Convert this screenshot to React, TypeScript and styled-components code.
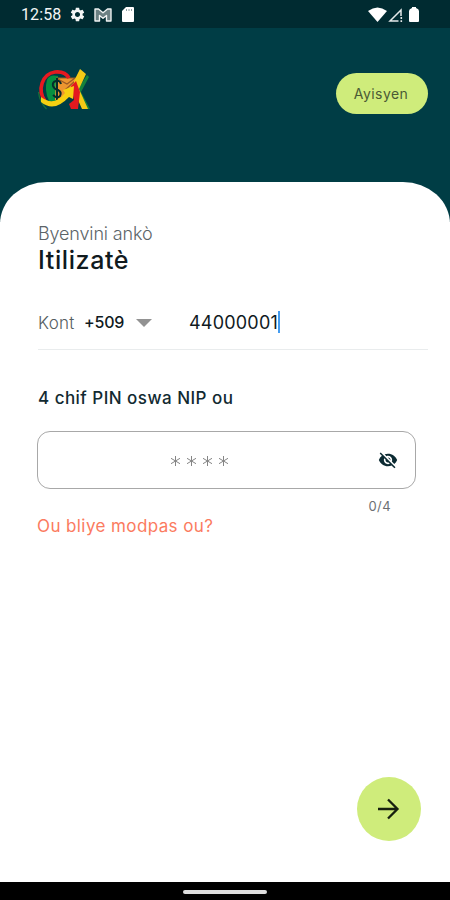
import React from 'react';
import styled, { createGlobalStyle } from 'styled-components';
import { MdSettings, MdVisibilityOff } from 'react-icons/md';

const GlobalStyle = createGlobalStyle`
  * { box-sizing: border-box; }
  body { margin: 0; background: #fff; }
`;

const Screen = styled.div`
  width: 450px;
  height: 900px;
  display: flex;
  flex-direction: column;
  overflow: hidden;
  background: #fff;
  color: #101a1e;
  font-family: Inter, Roboto, sans-serif;
`;

const StatusBar = styled.div`
  flex: none;
  height: 28px;
  padding: 1px 29px 0 21px;
  display: flex;
  align-items: center;
  justify-content: space-between;
  background: #002b31;
  color: #f4f6f6;
`;

const StatusGroup = styled.div<{ $gap: number }>`
  display: flex;
  align-items: center;
  gap: ${(p) => p.$gap}px;
  svg { display: block; }
`;

const Clock = styled.span`
  width: 40px;
  font: 400 16px/20px Roboto, sans-serif;
  letter-spacing: 0.1px;
  white-space: nowrap;
`;

const Header = styled.header`
  flex: none;
  height: 194px;
  padding: 38px 22px 0 36px;
  display: flex;
  align-items: flex-start;
  justify-content: space-between;
  background: #003d45;
`;

const LanguageButton = styled.button`
  width: 92px;
  height: 41px;
  margin-top: 7px;
  padding: 0 2px 0 0;
  border: 0;
  border-radius: 21px;
  background: #cfec7b;
  color: #4a5a35;
  font: 400 14px/20px Inter, sans-serif;
  letter-spacing: 0.45px;
`;

const Card = styled.main`
  flex: 1;
  margin-top: -40px;
  padding: 41px 22px 0 38px;
  display: flex;
  flex-direction: column;
  border-radius: 47px 47px 0 0 / 42px 42px 0 0;
  background: #fff;
`;

const Greeting = styled.div`
  font-size: 18px;
  line-height: 22px;
  font-weight: 300;
  letter-spacing: -0.15px;
  color: #5c6468;
`;

const UserName = styled.h1`
  margin: 0;
  font-size: 25px;
  line-height: 30px;
  font-weight: 500;
  letter-spacing: 0.6px;
`;

const AccountRow = styled.div`
  height: 56px;
  margin-top: 19px;
  display: flex;
  align-items: center;
  border-bottom: 1px solid #e9eced;
`;

const AccountLabel = styled.span`
  width: 46px;
  padding-top: 2px;
  font-size: 17px;
  font-weight: 300;
  letter-spacing: 0.3px;
  color: #555d61;
`;

const DialCode = styled.span`
  width: 52px;
  font-size: 16px;
  font-weight: 500;
  letter-spacing: -0.2px;
`;

const AccountNumber = styled.span`
  margin-left: 37px;
  padding-top: 1px;
  font-size: 18px;
  letter-spacing: 0.2px;
  white-space: nowrap;
`;

const Caret = styled.span`
  width: 2px;
  height: 22px;
  background: #459cf0;
`;

const PinLabel = styled.label`
  margin-top: 36px;
  font-size: 17px;
  line-height: 24px;
  font-weight: 500;
  letter-spacing: 0.47px;
  color: #122a31;
`;

const PinField = styled.div`
  width: 379px;
  height: 58px;
  margin: 21px 0 0 -1px;
  padding: 0 17px 0 132px;
  display: flex;
  align-items: center;
  justify-content: space-between;
  border: 1px solid #a8a8a8;
  border-radius: 13px;
  color: #0c2b33;
`;

const PinMask = styled.span`
  display: flex;
  gap: 5px;
  padding-top: 2px;
`;

const Counter = styled.div`
  width: 353px;
  margin-top: 8px;
  font-size: 13px;
  line-height: 18px;
  letter-spacing: 0.4px;
  text-align: right;
  color: #6d7073;
`;

const ForgotLink = styled.a`
  margin-left: -1px;
  font-size: 17px;
  line-height: 22px;
  letter-spacing: 0.4px;
  color: #fb7b60;
`;

const NextButton = styled.button`
  width: 64px;
  height: 64px;
  margin: auto 7px 41px auto;
  padding: 0;
  display: grid;
  place-items: center;
  border: 0;
  border-radius: 50%;
  background: #cfec7b;
`;

const NavBar = styled.div`
  flex: none;
  height: 18px;
  padding-top: 1px;
  display: flex;
  align-items: center;
  justify-content: center;
  background: #000;
`;

const HomeHandle = styled.div`
  width: 84px;
  height: 4px;
  border-radius: 2px;
  background: #dedede;
`;

const Logo = () => (
  <svg width="56" height="48" viewBox="0 0 56 48">
    <path d="M2.500 26q1 10 8 17" fill="none" stroke="#16713a" strokeWidth="1.300" />
    <path d="M51 9l2 2-8 15 9 17h-5l-9-17z" fill="#15823b" />
    <path d="M22 10q-9-2-11 4-3 10 2 21h9z" fill="#079040" />
    <path d="M20 12h25l-9 9-1 8-8 5h-8z" fill="#ed9630" />
    <path d="M20 12h19l-8 6zM29 24l10-9" fill="none" stroke="#9c5a25" strokeWidth="1.200" />
    <path d="M9 35C1 24 6 8 19 6q10-1 14 6" fill="none" stroke="#e71920" strokeWidth="3.600" />
    <path d="M25 18q-1-4-5-3-4 1-3 5 1 3 5 4 4 2 2 6-3 3-7-1M21 12v23" fill="none" stroke="#062b2b" strokeWidth="2" />
    <path d="M38 15l6-12 6 5-7 15 9 20h-6l-8-18z" fill="#f5c915" />
    <path d="M35 20l5-5 4 11-2 17h-7l-2-5 5-4z" fill="#e3191f" />
    <path d="M5 31q13 10 24-4l-2-3 11-4-1 13-4-2Q18 47 5 36z" fill="#f6d011" />
  </svg>
);

const MailGlyph = () => (
  <svg width="18" height="14" viewBox="0 0 18 14">
    <path d="M1 1h3.500L9 4.700 13.500 1H17v12h-4.500V7.500L9 10.300 5.500 7.500V13H1z" fill="#6b8083" stroke="#f0f3f3" strokeWidth="1.400" strokeLinejoin="round" />
  </svg>
);

const StarGlyph = () => (
  <svg width="11" height="12" viewBox="0 0 11 12">
    <path d="M5.500 1v10M1 3.300l9 5.400M10 3.300L1 8.700" fill="none" stroke="#858585" strokeWidth="1" />
  </svg>
);

const SdCardGlyph = () => (
  <svg width="15" height="15" viewBox="0 0 15 15">
    <path d="M6 0h7q1 0 1 1v13q0 1-1 1H3q-1 0-1-1V4z" fill="#fff" />
    <path d="M6.500 2v2M9 2v2M11.500 2v2" stroke="#8ea0a2" strokeWidth="1" />
  </svg>
);

export default function App() {
  return (
    <>
      <GlobalStyle />
      <Screen>
        <StatusBar>
          <StatusGroup $gap={8}>
            <Clock>12:58</Clock>
            <MdSettings size={17} />
            <MailGlyph />
            <SdCardGlyph />
          </StatusGroup>
          <StatusGroup $gap={1}>
            <svg width="19" height="16" viewBox="0 0 19 16">
              <path d="M0 4Q9.500-3 19 4L9.500 15z" fill="#fff" />
            </svg>
            <svg width="17" height="16" viewBox="0 0 17 16">
              <path d="M10.500 14H2L13 3v6" fill="none" stroke="#e5eaea" strokeWidth="1.500" />
              <path d="M13.300 10v2M13.300 13.300V15" stroke="#e5eaea" strokeWidth="1.600" />
            </svg>
            <svg width="15" height="16" viewBox="0 0 15 16">
              <path d="M6 0h4v1q3 1 3 3v10q0 1-1 1H4q-1 0-1-1V4q0-2 3-3z" fill="#fff" />
            </svg>
          </StatusGroup>
        </StatusBar>
        <Header>
          <Logo />
          <LanguageButton>Ayisyen</LanguageButton>
        </Header>
        <Card>
          <Greeting>Byenvini ankò</Greeting>
          <UserName>Itilizatè</UserName>
          <AccountRow>
            <AccountLabel>Kont</AccountLabel>
            <DialCode>+509</DialCode>
            <svg width="16" height="10" viewBox="0 0 16 10">
              <path d="M0 2h16L8 10z" fill="#929292" />
            </svg>
            <AccountNumber>44000001</AccountNumber>
            <Caret />
          </AccountRow>
          <PinLabel>4 chif PIN oswa NIP ou</PinLabel>
          <PinField>
            <PinMask>
              {[0, 1, 2, 3].map((i) => (
                <StarGlyph key={i} />
              ))}
            </PinMask>
            <MdVisibilityOff size={20} />
          </PinField>
          <Counter>0/4</Counter>
          <ForgotLink>Ou bliye modpas ou?</ForgotLink>
          <NextButton aria-label="Kontinye">
            <svg width="24" height="24" viewBox="0 0 24 24">
              <path d="M1 12h19M11 2.500l9.500 9.500-9.500 9.500" fill="none" stroke="#17200f" strokeWidth="2.300" />
            </svg>
          </NextButton>
        </Card>
        <NavBar>
          <HomeHandle />
        </NavBar>
      </Screen>
    </>
  );
}
